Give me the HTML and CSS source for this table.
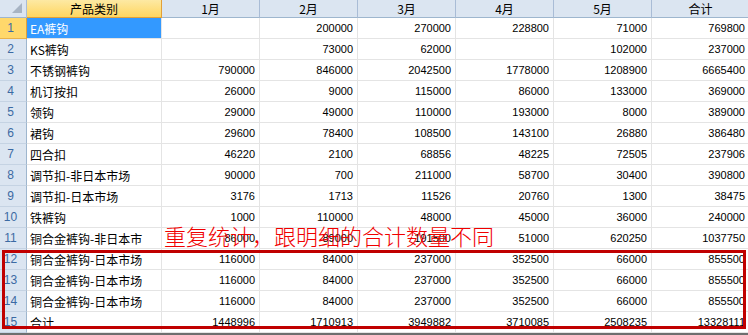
FILE: index.html
```html
<!DOCTYPE html>
<html lang="zh">
<head>
<meta charset="utf-8">
<title>产品类别</title>
<link rel="stylesheet" href="styles.css">
</head>
<body>
<div class="wrap">
  <div class="sheet">
    <div class="h corner"><span class="tri"></span></div>
    <div class="h sel-col">产品类别</div>
    <div class="h">1月</div>
    <div class="h">2月</div>
    <div class="h">3月</div>
    <div class="h">4月</div>
    <div class="h">5月</div>
    <div class="h">合计</div>

    <div class="rh sel-row">1</div><div class="t sel">EA裤钩</div><div class="n"></div><div class="n">200000</div><div class="n">270000</div><div class="n">228800</div><div class="n">71000</div><div class="n">769800</div>
    <div class="rh">2</div><div class="t">KS裤钩</div><div class="n"></div><div class="n">73000</div><div class="n">62000</div><div class="n"></div><div class="n">102000</div><div class="n">237000</div>
    <div class="rh">3</div><div class="t">不锈钢裤钩</div><div class="n">790000</div><div class="n">846000</div><div class="n">2042500</div><div class="n">1778000</div><div class="n">1208900</div><div class="n">6665400</div>
    <div class="rh">4</div><div class="t">机订按扣</div><div class="n">26000</div><div class="n">9000</div><div class="n">115000</div><div class="n">86000</div><div class="n">133000</div><div class="n">369000</div>
    <div class="rh">5</div><div class="t">领钩</div><div class="n">29000</div><div class="n">49000</div><div class="n">110000</div><div class="n">193000</div><div class="n">8000</div><div class="n">389000</div>
    <div class="rh">6</div><div class="t">裙钩</div><div class="n">29600</div><div class="n">78400</div><div class="n">108500</div><div class="n">143100</div><div class="n">26880</div><div class="n">386480</div>
    <div class="rh">7</div><div class="t">四合扣</div><div class="n">46220</div><div class="n">2100</div><div class="n">68856</div><div class="n">48225</div><div class="n">72505</div><div class="n">237906</div>
    <div class="rh">8</div><div class="t">调节扣-非日本市场</div><div class="n">90000</div><div class="n">700</div><div class="n">211000</div><div class="n">58700</div><div class="n">30400</div><div class="n">390800</div>
    <div class="rh">9</div><div class="t">调节扣-日本市场</div><div class="n">3176</div><div class="n">1713</div><div class="n">11526</div><div class="n">20760</div><div class="n">1300</div><div class="n">38475</div>
    <div class="rh">10</div><div class="t">铁裤钩</div><div class="n">1000</div><div class="n">110000</div><div class="n">48000</div><div class="n">45000</div><div class="n">36000</div><div class="n">240000</div>
    <div class="rh">11</div><div class="t">铜合金裤钩-非日本市</div><div class="n">86000</div><div class="n">89000</div><div class="n">191500</div><div class="n">51000</div><div class="n">620250</div><div class="n">1037750</div>
    <div class="rh">12</div><div class="t">铜合金裤钩-日本市场</div><div class="n">116000</div><div class="n">84000</div><div class="n">237000</div><div class="n">352500</div><div class="n">66000</div><div class="n">855500</div>
    <div class="rh">13</div><div class="t">铜合金裤钩-日本市场</div><div class="n">116000</div><div class="n">84000</div><div class="n">237000</div><div class="n">352500</div><div class="n">66000</div><div class="n">855500</div>
    <div class="rh">14</div><div class="t">铜合金裤钩-日本市场</div><div class="n">116000</div><div class="n">84000</div><div class="n">237000</div><div class="n">352500</div><div class="n">66000</div><div class="n">855500</div>
    <div class="rh">15</div><div class="t">合计</div><div class="n">1448996</div><div class="n">1710913</div><div class="n">3949882</div><div class="n">3710085</div><div class="n">2508235</div><div class="n">13328111</div>
  </div>
  <div class="foot"></div>
  <div class="note">重复统计，跟明细的合计数量不同</div>
  <div class="redbox"></div>
</div>
</body>
</html>
```
FILE: styles.css
```css
* { box-sizing: border-box; }
html, body {
  margin: 0;
  padding: 0;
  background: #ffffff;
  overflow: hidden;
}
.wrap {
  position: relative;
  width: 748px;
  height: 335px;
  overflow: hidden;
}
.sheet {
  display: grid;
  grid-template-columns: 27px 135px repeat(6, 98px);
  grid-template-rows: 18px repeat(15, 21px);
  width: 750px;
  font-family: "Liberation Sans", "Noto Sans CJK SC", sans-serif;
  font-size: 12px;
  color: #000;
}
.sheet > div {
  display: flex;
  align-items: center;
  overflow: hidden;
  white-space: nowrap;
  border-right: 1px solid #e4e4e4;
  border-bottom: 1px solid #e4e4e4;
}
.h {
  justify-content: center;
  background: #dbe5f1;
  border-right: 1px solid #a9bcd6 !important;
  border-bottom: 1px solid #9eb6ce !important;
  font-family: "Noto Sans CJK SC", sans-serif;
  font-size: 12px;
  line-height: 1;
}
.corner {
  position: relative;
}
.tri {
  position: absolute;
  right: 4px;
  bottom: 4px;
  width: 0;
  height: 0;
  border-left: 10px solid transparent;
  border-bottom: 10px solid #a7b4c4;
}
.sel-col {
  background: linear-gradient(#fde9a3, #ffd660);
  border-right: 1px solid #e2a038 !important;
  border-bottom: 1px solid #e2a038 !important;
}
.rh {
  justify-content: center;
  padding-right: 5px;
  background: #dbe5f1;
  border-right: 1px solid #9eb6ce !important;
  border-bottom: 1px solid #c5d3e3 !important;
  color: #3b6aa3;
  font-family: "Liberation Sans", sans-serif;
  font-size: 12px;
}
.sel-row {
  background: #ffd86b;
  border-right: 1px solid #e2a038 !important;
  border-bottom: 1px solid #e9b24a !important;
}
.t {
  padding-left: 3px;
  font-family: "Noto Sans CJK SC", sans-serif;
  font-size: 12px;
}
.sel {
  background: #3399ff;
  color: #fff;
}
.n {
  justify-content: flex-end;
  padding-right: 4px;
  font-family: "Liberation Sans", sans-serif;
  font-size: 11px;
}
.foot {
  height: 2px;
  background: #6e6e6e;
}
.note {
  position: absolute;
  left: 164px;
  top: 220px;
  font-family: "Noto Sans CJK SC", sans-serif;
  font-size: 22px;
  font-weight: 300;
  line-height: 30px;
  color: #f00000;
  white-space: nowrap;
}
.redbox {
  position: absolute;
  left: 2px;
  top: 250px;
  width: 744px;
  height: 79px;
  border: 3px solid #c00000;
}
```
